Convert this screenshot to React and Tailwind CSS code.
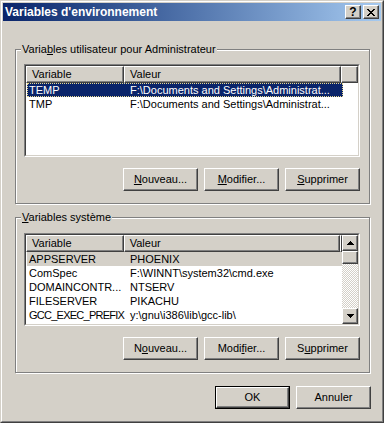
const raised =
  'border border-t-white border-l-white border-r-[#404040] border-b-[#404040] shadow-[inset_-1px_-1px_0_#808080] bg-[#d4d0c8]';

function Button({ children }) {
  return (
    <div className={`w-[75px] h-[23px] flex items-center justify-center ${raised}`}>
      <span>{children}</span>
    </div>
  );
}

function Arrow({ down }) {
  return (
    <svg width="7" height="4" viewBox="0 0 7 4" shapeRendering="crispEdges" className={down ? 'rotate-180' : ''}>
      <path d="M3 0h1v1h-1z M2 1h3v1h-3z M1 2h5v1h-5z M0 3h7v1h-7z" fill="#000" />
    </svg>
  );
}

function GroupBox({ label, children, className = '' }) {
  return (
    <div
      className={`ml-[12px] w-[355px] border border-[#808080] shadow-[inset_1px_1px_0_#fff,1px_1px_0_#fff] flex flex-col ${className}`}
    >
      <div className="-mt-[7px] ml-[5px] px-[1px] w-fit h-[13px] leading-[13px] bg-[#d4d0c8]">{label}</div>
      {children}
    </div>
  );
}

function ListView({ rows, selected, focused, scroll }) {
  return (
    <div className="ml-[8px] w-[336px] h-[93px] border border-t-[#808080] border-l-[#808080] border-r-white border-b-white">
      <div className="h-full flex border border-t-[#404040] border-l-[#404040] border-r-[#d4d0c8] border-b-[#d4d0c8] bg-white">
        <div className="flex-1 flex flex-col overflow-hidden">
          <div className="flex h-[17px] shrink-0">
            <div className={`w-[98px] pl-[5px] leading-[15px] ${raised}`}>Variable</div>
            <div className={`w-[217px] pl-[5px] leading-[15px] ${raised}`}>Valeur</div>
            <div className={`flex-1 ${raised}`}></div>
          </div>
          {rows.map(([name, value, tight], i) => {
            const sel = i === selected;
            let cls = '';
            if (sel && focused) cls = 'bg-[#0a246a] text-white border border-dotted border-[#e8d890]';
            else if (sel) cls = 'bg-[#d4d0c8] border border-transparent';
            else cls = 'border border-transparent';
            return (
              <div key={name} className={`ml-[1px] w-[316px] h-[14px] flex items-center whitespace-nowrap ${cls}`}>
                <div className={`w-[96px] pl-[1px] ${tight ? 'tracking-[-0.75px]' : ''}`}>{name}</div>
                <div className="pl-[6px]">{value}</div>
              </div>
            );
          })}
        </div>
        {scroll && (
          <div className="w-[16px] flex flex-col">
            <div className={`h-[16px] flex items-center justify-center ${raised}`}>
              <Arrow />
            </div>
            <div className={`h-[13px] ${raised}`}></div>
            <div className="flex-1 bg-[image:repeating-conic-gradient(#d4d0c8_0_25%,#ffffff_0_50%)] bg-[length:2px_2px]"></div>
            <div className={`h-[16px] flex items-center justify-center ${raised}`}>
              <Arrow down />
            </div>
          </div>
        )}
      </div>
    </div>
  );
}

export default function App() {
  return (
    <div className="w-[384px] h-[423px] bg-[#d4d0c8] border border-t-[#d4d0c8] border-l-[#d4d0c8] border-r-[#404040] border-b-[#404040] font-['Liberation_Sans',Arial,sans-serif] text-[11px] text-black">
      <div className="h-full border border-t-white border-l-white border-r-[#808080] border-b-[#808080] p-[1px] flex flex-col">
        <div className="h-[18px] shrink-0 flex items-center pl-[2px] pr-[2px] bg-gradient-to-r from-[#0a246a] to-[#a6caf0]">
          <span className="flex-1 text-white font-bold text-[12px] leading-[18px]">Variables d'environnement</span>
          <div className="flex gap-[2px]">
            <div className={`w-[16px] h-[14px] flex items-center justify-center font-bold text-[12px] leading-[12px] ${raised}`}>?</div>
            <div className={`w-[16px] h-[14px] flex items-center justify-center ${raised}`}>
              <svg width="8" height="7" viewBox="0 0 8 7" shapeRendering="crispEdges">
                <path
                  d="M0 0h2v1h-2z M6 0h2v1h-2z M1 1h2v1h-2z M5 1h2v1h-2z M2 2h4v1h-4z M3 3h2v1h-2z M2 4h4v1h-4z M1 5h2v1h-2z M5 5h2v1h-2z M0 6h2v1h-2z M6 6h2v1h-2z"
                  fill="#000"
                />
              </svg>
            </div>
          </div>
        </div>

        <GroupBox
          className="mt-[28px]"
          label={
            <>
              Varia<span className="underline">b</span>les utilisateur pour Administrateur
            </>
          }
        >
          <div className="mt-[8px]">
            <ListView
              focused
              selected={0}
              rows={[
                ['TEMP', 'F:\\Documents and Settings\\Administrat...'],
                ['TMP', 'F:\\Documents and Settings\\Administrat...'],
              ]}
            />
          </div>
          <div className="mt-[11px] pb-[12px] pr-[9px] flex justify-end gap-[6px]">
            <Button>
              <span className="underline">N</span>ouveau...
            </Button>
            <Button>
              <span className="underline">M</span>odifier...
            </Button>
            <Button>
              <span className="underline">S</span>upprimer
            </Button>
          </div>
        </GroupBox>

        <GroupBox
          className="mt-[13px]"
          label={
            <>
              <span className="underline">V</span>ariables système
            </>
          }
        >
          <div className="mt-[9px]">
            <ListView
              scroll
              selected={0}
              rows={[
                ['APPSERVER', 'PHOENIX'],
                ['ComSpec', 'F:\\WINNT\\system32\\cmd.exe'],
                ['DOMAINCONTR...', 'NTSERV'],
                ['FILESERVER', 'PIKACHU'],
                ['GCC_EXEC_PREFIX', 'y:\\gnu\\i386\\lib\\gcc-lib\\', true],
              ]}
            />
          </div>
          <div className="mt-[11px] pb-[12px] pr-[9px] flex justify-end gap-[6px]">
            <Button>
              N<span className="underline">o</span>uveau...
            </Button>
            <Button>
              Modi<span className="underline">f</span>ier...
            </Button>
            <Button>
              S<span className="underline">u</span>pprimer
            </Button>
          </div>
        </GroupBox>

        <div className="mt-[13px] pr-[10px] flex justify-end gap-[6px]">
          <div className="w-[75px] h-[23px] border border-black">
            <div className={`h-full flex items-center justify-center ${raised}`}>OK</div>
          </div>
          <Button>Annuler</Button>
        </div>
      </div>
    </div>
  );
}
